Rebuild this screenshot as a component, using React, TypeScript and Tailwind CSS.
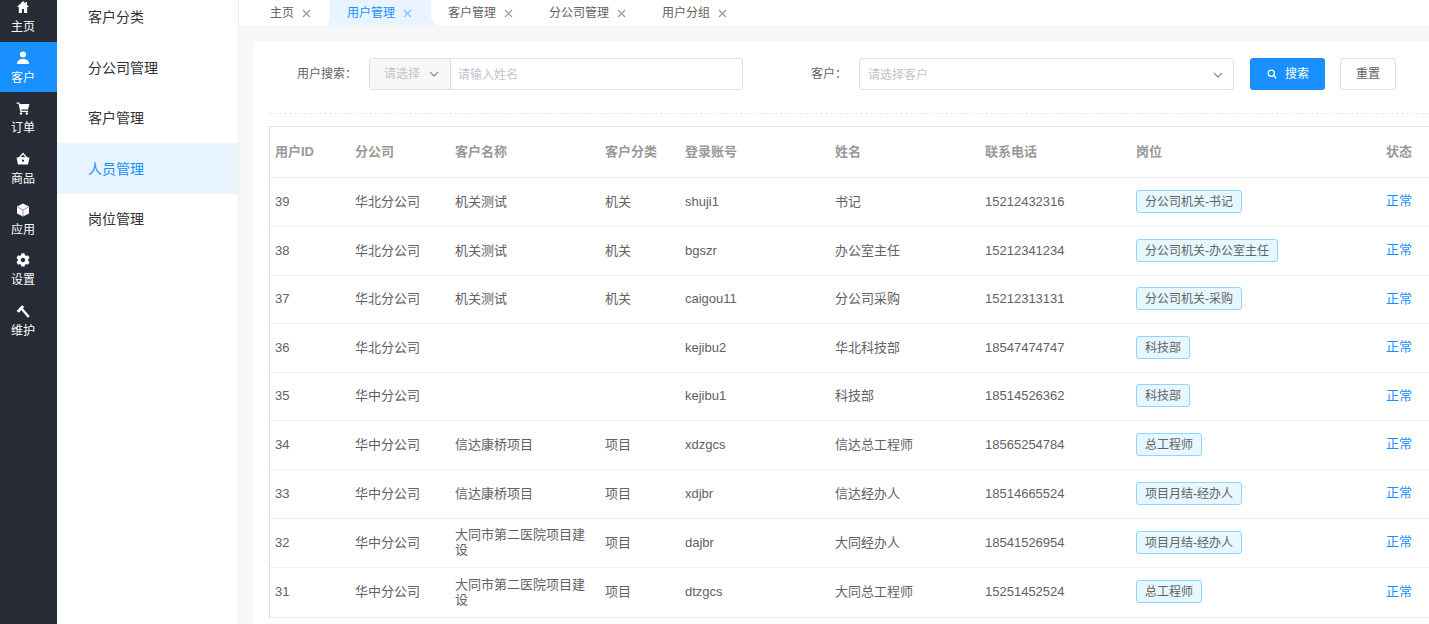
import React from "react";
import { FaCog } from "react-icons/fa";

const Svg = ({ children }: { children: React.ReactNode }) => (
  <svg width="14" height="14" viewBox="0 0 14 14" className="mb-[5px] mt-[1px]" fill="#fff">{children}</svg>
);
const Home = () => <Svg><path d="M7 1L1 7h1.8v6H6V9h2v4h3.2V7H13l-2-2V2H9.5v1.5z" /></Svg>;
const User = () => <Svg><circle cx="7" cy="3.6" r="3" /><path d="M1 13c0-3.6 2.6-5 6-5s6 1.400 6 5z" /></Svg>;
const Cart = () => <Svg><path d="M0.500 1.500h2.800l.5 1.500h9.700l-1.500 5.500H5.300l.3 1.200h6.400v1.200H4.400L2.500 2.700H.5z" /><circle cx="5" cy="12.500" r="1.200" /><circle cx="10.800" cy="12.500" r="1.200" /></Svg>;
const Basket = () => (
  <Svg>
    <path d="M7 1.500L3 6h8z" fill="none" stroke="#fff" strokeWidth="1.300" />
    <path d="M.5 5.500h13l-1.500 7H2z" />
    <circle cx="7" cy="8.700" r="1.100" fill="#272b35" />
  </Svg>
);
const Cube = () => (
  <Svg>
    <path d="M7 .5L13 3.500v7L7 13.500 1 10.500v-7z" />
    <path d="M7 7v6.500M7 7L1.500 4M7 7l5.500-3" stroke="#8a6aa8" strokeWidth=".8" fill="none" />
  </Svg>
);
const Gear = () => <FaCog size={14} className="mb-[5px] mt-[1px]" />;
const Hammer = () => (
  <Svg>
    <path d="M.5 7L6 1.200l2.200 1.600L3 8.800z" />
    <path d="M5.500 4.500L12.800 13" stroke="#fff" strokeWidth="2.400" fill="none" />
  </Svg>
);

const side = [
  { t: "主页", I: Home },
  { t: "客户", I: User, on: true },
  { t: "订单", I: Cart },
  { t: "商品", I: Basket },
  { t: "应用", I: Cube },
  { t: "设置", I: Gear },
  { t: "维护", I: Hammer },
];
const sub = ["客户分类", "分公司管理", "客户管理", "人员管理", "岗位管理"];
const tabs = [
  { t: "主页", w: "w-[77px] pl-[17px]" },
  { t: "用户管理", w: "-ml-[3px] -mr-[4px] w-[108px] pl-[20px]", on: true },
  { t: "客户管理", w: "w-[101px] pl-[17px]" },
  { t: "分公司管理", w: "w-[113px] pl-[17px]" },
  { t: "用户分组", w: "w-[101px] pl-[17px]" },
];
const rows = [
  ["39", "华北分公司", "机关测试", "机关", "shuji1", "书记", "15212432316", "分公司机关-书记", "h-[49px]"],
  ["38", "华北分公司", "机关测试", "机关", "bgszr", "办公室主任", "15212341234", "分公司机关-办公室主任", "h-[49px]"],
  ["37", "华北分公司", "机关测试", "机关", "caigou11", "分公司采购", "15212313131", "分公司机关-采购", "h-[48px]"],
  ["36", "华北分公司", "", "", "kejibu2", "华北科技部", "18547474747", "科技部", "h-[49px]"],
  ["35", "华中分公司", "", "", "kejibu1", "科技部", "18514526362", "科技部", "h-[48px]"],
  ["34", "华中分公司", "信达康桥项目", "项目", "xdzgcs", "信达总工程师", "18565254784", "总工程师", "h-[49px]"],
  ["33", "华中分公司", "信达康桥项目", "项目", "xdjbr", "信达经办人", "18514665524", "项目月结-经办人", "h-[49px]"],
  ["32", "华中分公司", "大同市第二医院项目建设", "项目", "dajbr", "大同经办人", "18541526954", "项目月结-经办人", "h-[49px]"],
  ["31", "华中分公司", "大同市第二医院项目建设", "项目", "dtzgcs", "大同总工程师", "15251452524", "总工程师", "h-[50px]"],
];
const heads = ["用户ID", "分公司", "客户名称", "客户分类", "登录账号", "姓名", "联系电话", "岗位", "状态"];
const widths = ["w-[80px]", "w-[100px]", "w-[150px]", "w-[80px]", "w-[150px]", "w-[150px]", "w-[151px]", "w-[250px]", "w-[80px]"];

function Close({ on }: { on?: boolean }) {
  return (
    <svg width="9" height="9" viewBox="0 0 9 9" className="ml-[8px] mt-px">
      <path d="M1 1l7 7M8 1l-7 7" stroke={on ? "#7dbfff" : "#a09a96"} strokeWidth="1.100" fill="none" />
    </svg>
  );
}
function Chevron({ c = "#909399" }: { c?: string }) {
  return (
    <svg width="10" height="6" viewBox="0 0 10 6">
      <path d="M1 1l4 4 4-4" stroke={c} strokeWidth="1.300" fill="none" />
    </svg>
  );
}

export default function App() {
  return (
    <div className="flex h-screen overflow-hidden bg-[#f7f7f7] font-['Liberation_Sans','Noto_Sans_CJK_SC',sans-serif] text-[13px] text-[#606266]">
      <aside className="w-[57px] shrink-0 bg-[#272b35]">
        <div className="-mt-[9px]">
          {side.map(({ t, I, on }) => (
            <div key={t} className={`flex h-[50.600px] flex-col items-center justify-center pr-[11px] pt-[2px] text-[12px] leading-[16px] text-white ${on ? "bg-[#1890ff]" : ""}`}>
              <I />
              <span>{t}</span>
            </div>
          ))}
        </div>
      </aside>
      <nav className="w-[182px] shrink-0 border-r border-[#eeeeee] bg-white">
        <div className="-mt-[8.500px]">
          {sub.map((t) => (
            <div key={t} className={`flex h-[50.600px] items-center pl-[31px] pt-[1.600px] text-[14px] ${t === "人员管理" ? "bg-[#e8f4ff] text-[#1890ff]" : "text-[#303133]"}`}>
              {t}
            </div>
          ))}
        </div>
      </nav>
      <main className="flex min-w-0 flex-1 flex-col">
        <div className="flex h-[25px] shrink-0 bg-white pl-[14px] text-[12px]">
          {tabs.map(({ t, w, on }) => (
            <div key={t} className={`flex h-full shrink-0 items-center ${w} ${on ? "bg-[#e8f4ff] text-[#1890ff] [clip-path:polygon(3px_0,104px_0,104px_18px,108px_100%,0_100%,3px_18px)]" : "text-[#606266]"}`}>
              <span>{t}</span>
              <Close on={on} />
            </div>
          ))}
        </div>
        <section className="ml-[14px] mt-[16px] min-h-0 flex-1 overflow-hidden rounded-tl-[3px] bg-white pl-[16px]">
          <div className="flex h-[73px] items-start border-b border-dashed border-[#e8e8e8] pt-[17px] text-[12px]">
            <span className="ml-[28px] w-[72px] leading-[32px] text-[#606266]">用户搜索：</span>
            <div className="flex h-[32px] w-[374px] rounded-[3px] border border-[#dcdfe6]">
              <div className="flex w-[81px] items-center rounded-l-[3px] border-r border-[#dcdfe6] bg-[#f7f7f7] pl-[14px] text-[#c0c4cc]">
                <span>请选择</span>
                <span className="ml-[9px] flex"><Chevron /></span>
              </div>
              <div className="flex items-center pl-[7px] pt-px text-[#c0c4cc]">请输入姓名</div>
            </div>
            <span className="ml-[68px] w-[48px] leading-[32px] text-[#606266]">客户：</span>
            <div className="flex h-[32px] w-[375px] items-center justify-between rounded-[3px] border border-[#dcdfe6] pl-[8px] pr-[10px] pt-px text-[#c0c4cc]">
              <span>请选择客户</span>
              <Chevron />
            </div>
            <button className="ml-[16px] flex h-[32px] w-[75px] items-center justify-center rounded-[3px] bg-[#1890ff] text-white">
              <svg width="10" height="10" viewBox="0 0 11 11" className="ml-[1px] mr-[8px]">
                <circle cx="4.700" cy="4.700" r="3.400" stroke="#fff" strokeWidth="1.400" fill="none" />
                <path d="M7.200 7.200l3 3" stroke="#fff" strokeWidth="1.400" />
              </svg>
              搜索
            </button>
            <button className="ml-[15px] h-[32px] w-[56px] rounded-[3px] border border-[#dcdfe6] bg-white text-[#606266]">重置</button>
          </div>
          <table className="mt-[12px] w-[1191px] table-fixed border-separate border-spacing-0 border-l border-t border-[#dcdfe6]">
            <colgroup>
              {widths.map((w, i) => <col key={i} className={w} />)}
            </colgroup>
            <thead>
              <tr className="h-[51px]">
                {heads.map((h) => (
                  <th key={h} className="border-b border-[#eeeeee] px-[5px] text-left font-bold text-[#999999]">{h}</th>
                ))}
              </tr>
            </thead>
            <tbody>
              {rows.map((r) => (
                <tr key={r[0]} className={r[8]}>
                  {r.slice(0, 7).map((c, i) => (
                    <td key={i} className="border-b border-[#eeeeee] px-[5px] pb-[2px] leading-[15px]">{c}</td>
                  ))}
                  <td className="border-b border-[#eeeeee] px-[5px] pb-[2px]">
                    <span className="inline-block h-[23px] rounded-[3px] border border-[#91d5ff] bg-[#e6f7ff] px-[8px] text-[12px] leading-[22px]">{r[7]}</span>
                  </td>
                  <td className="border-b border-[#eeeeee] px-[5px] pb-[2px] text-[#1890ff]">正常</td>
                </tr>
              ))}
            </tbody>
          </table>
        </section>
      </main>
    </div>
  );
}
